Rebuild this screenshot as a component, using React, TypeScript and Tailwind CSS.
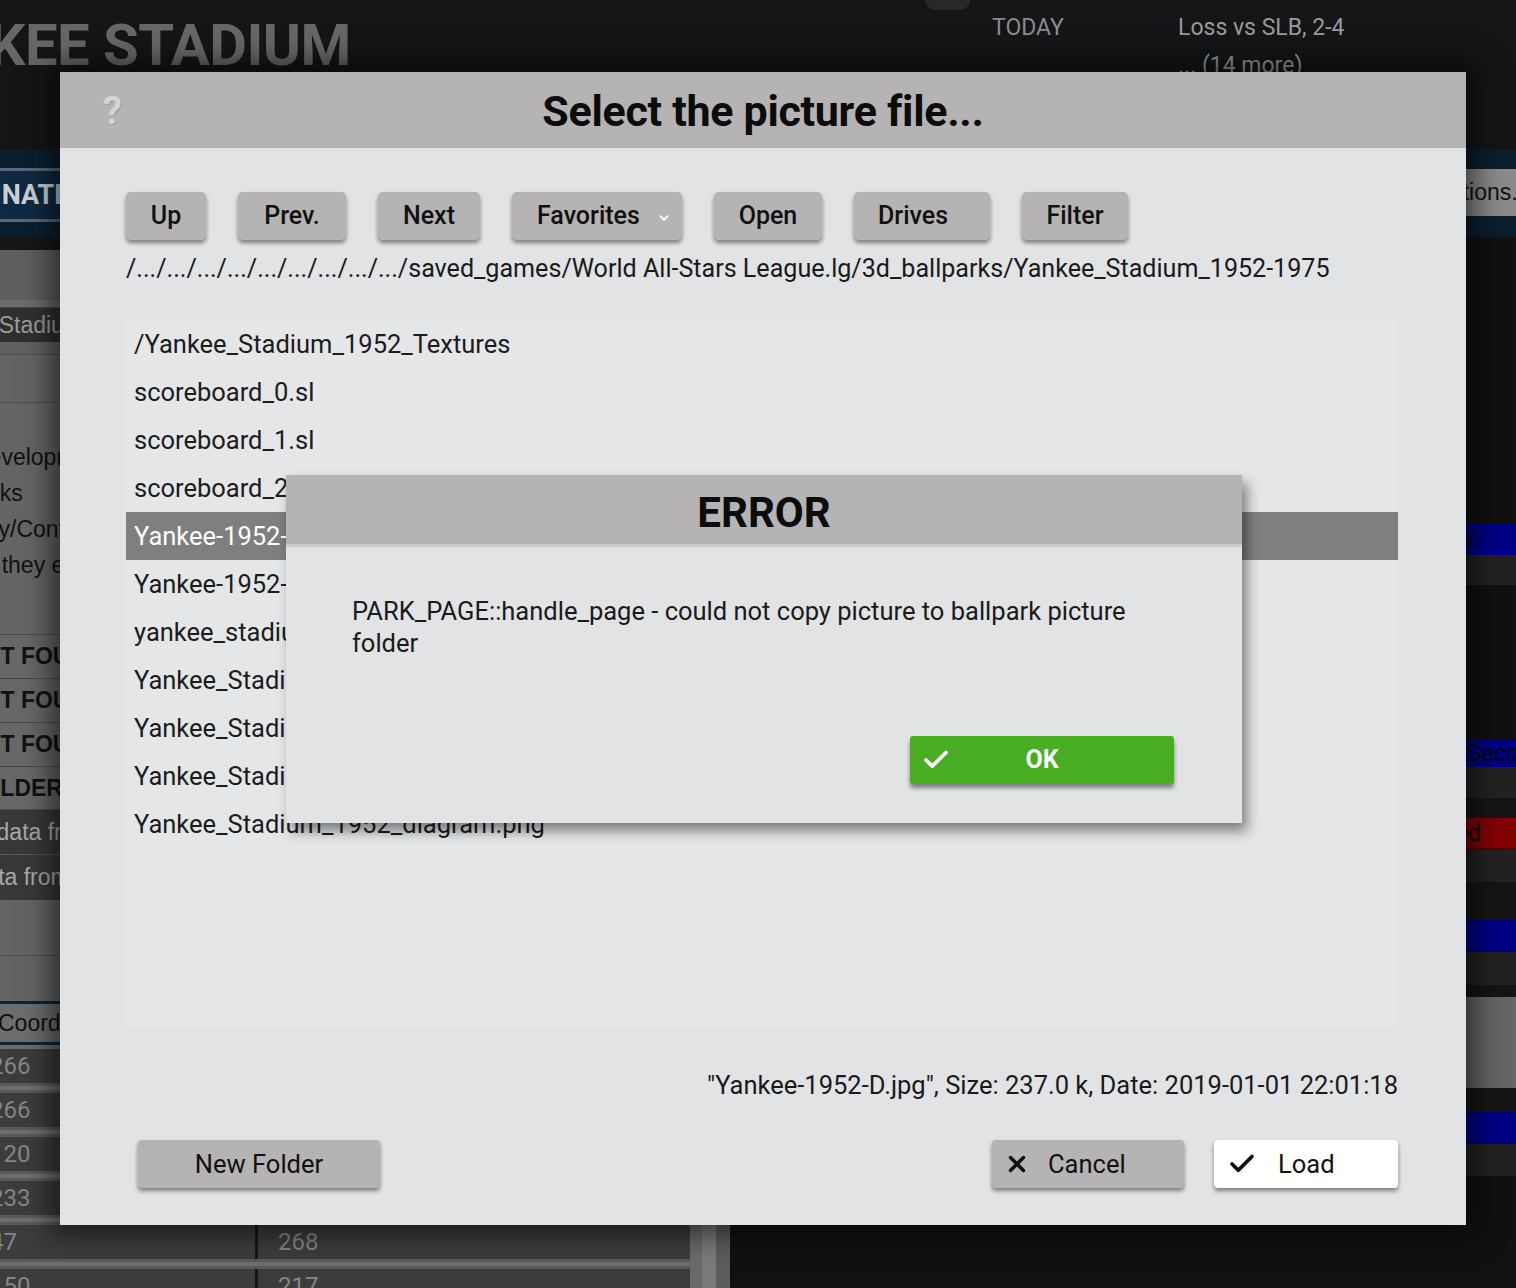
import { Check, ChevronDown, X } from 'lucide-react';

const tools = [
  { label: 'Up', w: 'w-[80px] justify-center' },
  { label: 'Prev.', w: 'w-[108px] justify-center' },
  { label: 'Next', w: 'w-[102px] justify-center' },
  { label: 'Favorites', w: 'w-[170px] pl-[25px]', menu: true },
  { label: 'Open', w: 'w-[108px] justify-center' },
  { label: 'Drives', w: 'w-[136px] pl-[24px]' },
  { label: 'Filter', w: 'w-[106px] justify-center' },
];

const files = [
  '/Yankee_Stadium_1952_Textures',
  'scoreboard_0.sl',
  'scoreboard_1.sl',
  'scoreboard_2.sl',
  'Yankee-1952-D.jpg',
  'Yankee-1952-N.jpg',
  'yankee_stadium_1952.txt',
  'Yankee_Stadium_1952.3d',
  'Yankee_Stadium_1952.sl',
  'Yankee_Stadium_1952_diagram.jpg',
  'Yankee_Stadium_1952_diagram.png',
];

const selected = 'Yankee-1952-D.jpg';

const numbers = [
  ['266', ''],
  ['266', ''],
  ['120', ''],
  ['233', ''],
  ['47', '268'],
  ['150', '217'],
];

// background app, mostly hidden by the dialog
const BackApp = () => (
  <div className="flex flex-col w-full h-full">
    <div className="h-[150px] flex shrink-0">
      <div className="w-[925px] overflow-hidden pt-[10px]">
        <div className="-ml-[122px] whitespace-nowrap text-[58px] leading-[70px] font-bold text-[#676767] tracking-[-0.5px]">
          YANKEE STADIUM
        </div>
      </div>
      <div className="w-[45px] h-[10px] rounded-b-full bg-[#26282a]" />
      <div className="w-[22px]" />
      <div className="w-[186px] pt-[14px] text-[23px] leading-[28px] text-[#8c8c8c]">TODAY</div>
      <div className="pt-[14px] text-[23px] leading-[28px] text-[#9a9a9a]">
        <div>Loss vs SLB, 2-4</div>
        <div className="mt-[10px]">... (14 more)</div>
      </div>
    </div>

    <div className="h-[87px] shrink-0 bg-[#0b1e2d] flex items-start justify-between overflow-hidden">
      <div className="mt-[18px] h-[54px] w-[300px] border-y-[3px] border-[#59687a] bg-[#0f2a40] flex items-center overflow-hidden">
        <span className="-ml-[96px] whitespace-nowrap text-[27px] font-bold text-[#c9d0d6]">COORDINATES</span>
      </div>
      <div className="mt-[19px] h-[47px] w-[150px] -mr-[40px] bg-[#8a8a8a] flex items-center pl-[26px] text-[23px] text-[#111] font-['Liberation_Sans',sans-serif]">
        Options...
      </div>
    </div>

    <div className="flex-1 flex font-['Liberation_Sans',sans-serif]">
      <div className="w-[690px] flex flex-col bg-[#161616] overflow-hidden">
        <div className="h-[13px] shrink-0" />
        <div className="h-[50px] shrink-0 bg-[#5f5f5f]" />
        <div className="h-[8px] shrink-0 bg-[#6b6b6b] border-b border-[#484848]" />
        <div className="h-[34px] shrink-0 bg-[#303030] flex items-center overflow-hidden">
          <span className="-ml-[84px] whitespace-nowrap text-[23px] text-[#9c9c9c]">Yankee Stadium</span>
        </div>
        <div className="h-[13px] shrink-0 bg-[#616161] border-b border-[#4c4c4c]" />
        <div className="h-[48px] shrink-0 bg-[#646464] border-b border-[#4f4f4f]" />
        <div className="h-[231px] shrink-0 bg-[#656565] pt-[36px] text-[23px] leading-[36px] text-[#111] overflow-hidden">
          <div className="-ml-[28px] whitespace-nowrap">Development</div>
          <div className="-ml-[36px] whitespace-nowrap">Parks</div>
          <div className="-ml-[82px] whitespace-nowrap">Directory/Contents</div>
          <div className="-ml-[29px] whitespace-nowrap">so they exist</div>
        </div>
        {['LEFT FOUL POLE', 'LEFT FOUL LINE', 'LEFT FOUL WALL'].map((t) => (
          <div key={t} className="h-[44px] shrink-0 bg-[#676767] border-t border-[#4a4a4a] flex items-center overflow-hidden">
            <span className="-ml-[43px] whitespace-nowrap text-[23px] font-bold text-[#111]">{t}</span>
          </div>
        ))}
        <div className="h-[44px] shrink-0 bg-[#676767] border-y border-[#4a4a4a] flex items-center overflow-hidden">
          <span className="-ml-[84px] whitespace-nowrap text-[23px] font-bold text-[#111]">OUTFIELDER INFO</span>
        </div>
        <div className="h-[45px] shrink-0 bg-[#383838] border-b border-[#555] flex items-center overflow-hidden">
          <span className="-ml-[61px] whitespace-nowrap text-[23px] text-[#a8a8a8]">Load data from</span>
        </div>
        <div className="h-[45px] shrink-0 bg-[#383838] flex items-center overflow-hidden">
          <span className="-ml-[99px] whitespace-nowrap text-[23px] text-[#a8a8a8]">Import data from</span>
        </div>
        <div className="h-[56px] shrink-0 bg-[#646464] border-b border-[#4d4d4d]" />
        <div className="h-[45px] shrink-0 bg-[#646464]" />
        <div className="h-[44px] shrink-0 bg-[#6d6d6d] border-y-[3px] border-[#0b2438] flex items-center overflow-hidden">
          <span className="-ml-[2px] whitespace-nowrap text-[23px] text-[#111]">Coordinates</span>
        </div>
        <div className="h-[4px] shrink-0 bg-[#6c6c6c]" />
        {numbers.map(([a, b], i) => (
          <div key={i} className="flex flex-col shrink-0">
            <div className="h-[34px] flex gap-[3px] font-['Roboto',sans-serif] text-[24px] text-[#858585]">
              <div className="w-[255px] bg-[#3c3c3c] flex items-center overflow-hidden">
                <span className="-ml-[10px]">{a}</span>
              </div>
              <div className="flex-1 bg-[#3c3c3c] flex items-center pl-[20px]">{b}</div>
            </div>
            <div className="h-[10px] bg-[#6e6e6e] border-y-[3px] border-[#5a5a5a]" />
          </div>
        ))}
      </div>
      <div className="w-[12px] bg-[#6a6a6a]" />
      <div className="w-[14px] bg-[#7a7a7a]" />
      <div className="w-[14px] bg-[#5c5c5c]" />
      <div className="flex-1 flex flex-col bg-[#111] text-[23px] overflow-hidden">
        <div className="h-[286px] shrink-0" />
        <div className="h-[32px] shrink-0 bg-[#000086] flex items-center justify-end pr-[40px] text-[#050505]">Outfielder</div>
        <div className="h-[30px] shrink-0 bg-[#222]" />
        <div className="h-[155px] shrink-0" />
        <div className="h-[27px] shrink-0 bg-[#000086] flex items-center pl-[736px] whitespace-nowrap text-[#050505]">Second Base</div>
        <div className="h-[31px] shrink-0 bg-[#222]" />
        <div className="h-[20px] shrink-0 bg-[#151515]" />
        <div className="h-[32px] shrink-0 bg-[#820000] border-b-[2px] border-[#5a0000] flex items-center justify-end pr-[35px] text-[#050505]">Grounded</div>
        <div className="h-[32px] shrink-0 bg-[#222]" />
        <div className="h-[38px] shrink-0 bg-[#151515]" />
        <div className="h-[32px] shrink-0 bg-[#000086]" />
        <div className="h-[33px] shrink-0 bg-[#222]" />
        <div className="h-[12px] shrink-0 bg-[#151515]" />
        <div className="h-[91px] shrink-0 bg-[#666]" />
        <div className="h-[24px] shrink-0 bg-[#151515]" />
        <div className="h-[32px] shrink-0 bg-[#000086]" />
        <div className="h-[32px] shrink-0 bg-[#222]" />
        <div className="flex-1" />
      </div>
    </div>
  </div>
);

export default function App() {
  return (
    <div className="relative w-[1516px] h-[1288px] overflow-hidden bg-[#131517] font-['Roboto',sans-serif]">
      <BackApp />

      {/* file dialog */}
      <div className="absolute left-[60px] top-[72px] w-[1406px] h-[1153px] flex flex-col bg-[#e2e3e5] shadow-[0_0_26px_10px_rgba(0,0,0,0.55)]">
        <div className="h-[76px] shrink-0 bg-[#b5b3b4] flex items-center pt-[3px]">
          <div className="w-[120px] pl-[43px] text-[38px] font-bold text-[#d4d4d4] [text-shadow:1px_1px_0_#9a9a9a]">?</div>
          <div className="flex-1 text-center text-[43px] font-bold text-[#0c0c0c] tracking-[-0.3px]">Select the picture file...</div>
          <div className="w-[120px]" />
        </div>

        <div className="flex-1 flex flex-col pl-[66px] pr-[68px] pt-[44px] pb-[37px]">
          <div className="flex gap-[32px] h-[48px]">
            {tools.map((t) => (
              <div
                key={t.label}
                className={`${t.w} h-[48px] rounded-[5px] bg-[#b5b3b4] shadow-[0_3px_4px_rgba(0,0,0,0.45)] flex items-center gap-[17px] text-[25px] font-medium text-[#111]`}
              >
                <span>{t.label}</span>
                {t.menu && <ChevronDown size={14} strokeWidth={3.5} className="text-[#f4f4f4] mt-[4px]" />}
              </div>
            ))}
          </div>

          <div className="mt-[14px] h-[30px] text-[25.1px] leading-[30px] text-[#1a1a1a] whitespace-nowrap">
            /.../.../.../.../.../.../.../.../.../saved_games/World All-Stars League.lg/3d_ballparks/Yankee_Stadium_1952-1975
          </div>

          <div className="mt-[36px] h-[708px] bg-[#e5e6e8] flex flex-col">
            {files.map((f) => (
              <div
                key={f}
                className={`h-[48px] shrink-0 flex items-center pl-[8px] text-[25.5px] ${
                  f === selected ? 'bg-[#7f7f7f] text-white' : 'text-[#1c1c1c]'
                }`}
              >
                {f}
              </div>
            ))}
          </div>

          <div className="mt-[42px] h-[30px] text-right text-[25.5px] leading-[30px] text-[#1a1a1a]">
            "Yankee-1952-D.jpg", Size: 237.0 k, Date: 2019-01-01 22:01:18
          </div>

          <div className="mt-[40px] h-[48px] flex">
            <div className="ml-[12px] w-[242px] h-[48px] rounded-[4px] bg-[#b5b3b4] shadow-[0_3px_4px_rgba(0,0,0,0.45)] flex items-center justify-center text-[25.5px] text-[#111]">
              New Folder
            </div>
            <div className="flex-1" />
            <div className="w-[192px] h-[48px] rounded-[4px] bg-[#b5b3b4] shadow-[0_3px_4px_rgba(0,0,0,0.45)] flex items-center pl-[12px] text-[25.5px] text-[#111]">
              <X size={26} strokeWidth={3.2} className="text-[#111]" />
              <span className="ml-[18px]">Cancel</span>
            </div>
            <div className="ml-[30px] w-[184px] h-[48px] rounded-[4px] bg-white shadow-[0_3px_4px_rgba(0,0,0,0.45)] flex items-center pl-[13px] text-[25.5px] text-[#111]">
              <Check size={30} strokeWidth={3} className="text-[#111]" />
              <span className="ml-[21px]">Load</span>
            </div>
          </div>
        </div>
      </div>

      {/* error popup */}
      <div className="absolute left-[286px] top-[475px] w-[956px] h-[348px] flex flex-col bg-[#e2e3e5] shadow-[5px_8px_12px_rgba(0,0,0,0.45)]">
        <div className="h-[72px] shrink-0 bg-[#b5b3b4] border-b-[3px] border-[#cbcbcd] flex items-center justify-center pt-[5px] text-[42px] font-bold text-[#0c0c0c]">
          ERROR
        </div>
        <div className="flex-1 flex flex-col pl-[66px] pr-[68px] pt-[48px] pb-[39px]">
          <div className="text-[25.5px] leading-[32px] text-[#1a1a1a]">
            PARK_PAGE::handle_page - could not copy picture to ballpark picture folder
          </div>
          <div className="mt-auto flex justify-end">
            <div className="w-[264px] h-[48px] rounded-[3px] bg-[#47ad22] shadow-[0_4px_4px_rgba(0,0,0,0.45)] grid grid-cols-[56px_1fr_56px] items-center">
              <Check size={30} strokeWidth={3} className="text-white ml-[11px]" />
              <span className="text-center text-[25px] font-bold text-white">OK</span>
              <span />
            </div>
          </div>
        </div>
      </div>
    </div>
  );
}
